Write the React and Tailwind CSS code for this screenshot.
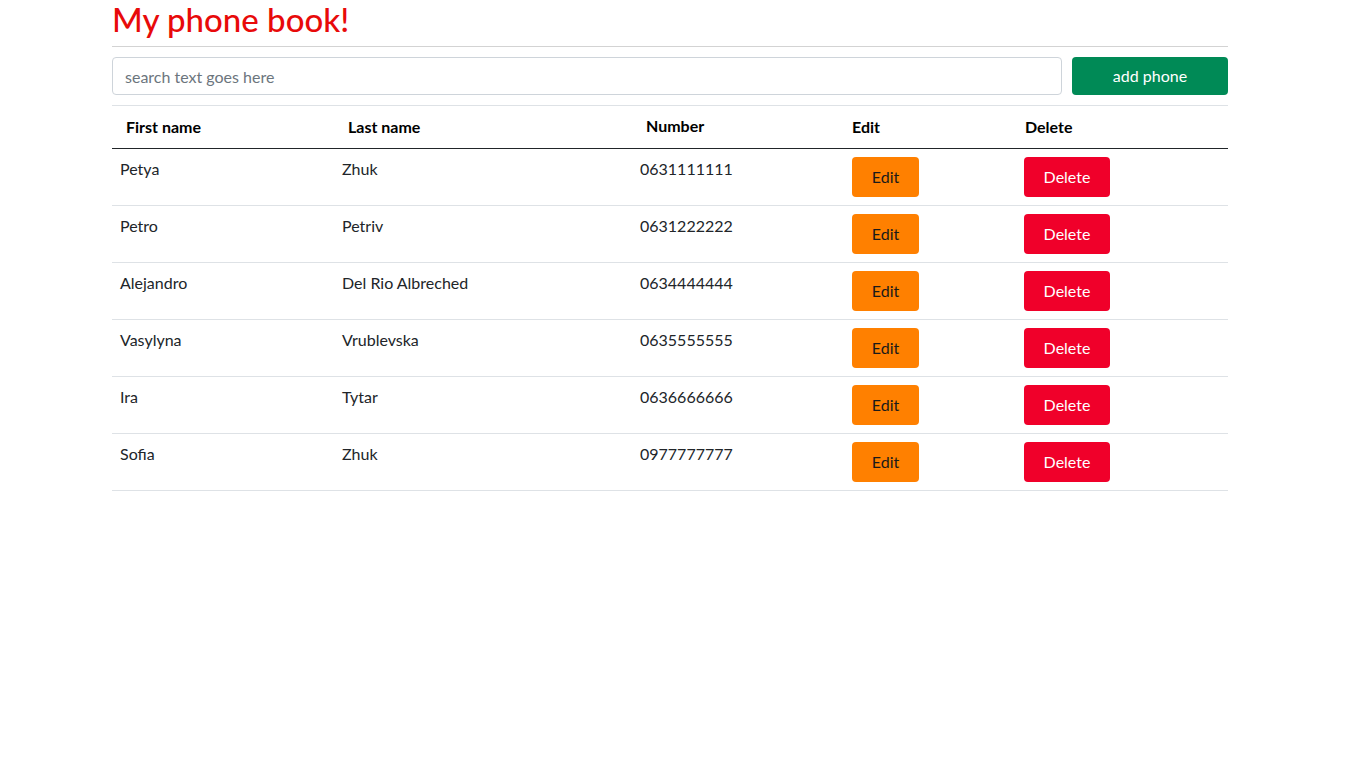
import { useState } from "react";

const phones = [
  { first: "Petya", last: "Zhuk", number: "0631111111" },
  { first: "Petro", last: "Petriv", number: "0631222222" },
  { first: "Alejandro", last: "Del Rio Albreched", number: "0634444444" },
  { first: "Vasylyna", last: "Vrublevska", number: "0635555555" },
  { first: "Ira", last: "Tytar", number: "0636666666" },
  { first: "Sofia", last: "Zhuk", number: "0977777777" },
];

export default function App() {
  const [search, setSearch] = useState("");

  return (
    <div className="min-h-screen bg-white font-['Lato','Liberation_Sans',sans-serif] text-[16px] text-[#212529]">
      <div className="ml-[112px] w-[1116px]">
        {/* header */}
        <h2 className="text-[33px] leading-[38px] font-medium text-[#e80a0a]">
          My phone book!
        </h2>
        <hr className="mt-2 border-t border-[#d3d3d3]" />

        {/* search + add */}
        <div className="mt-[10px] flex gap-[10px]">
          <input
            value={search}
            onChange={(e) => setSearch(e.target.value)}
            placeholder="search text goes here"
            className="h-[38px] flex-1 rounded-[4px] border border-[#ced4da] px-3 text-[16px] outline-none placeholder:text-[#6c757d]"
          />
          <button className="h-[38px] w-[156px] rounded-[4px] bg-[#008a56] text-[16px] text-white">
            add phone
          </button>
        </div>

        {/* table */}
        <table className="mt-[10px] w-full table-fixed border-collapse border-t border-[#dee2e6]">
          <colgroup>
            <col className="w-[222px]" />
            <col className="w-[298px]" />
            <col className="w-[212px]" />
            <col className="w-[172px]" />
            <col className="w-[212px]" />
          </colgroup>
          <thead>
            <tr className="h-[43px] border-b border-[#212529] text-left font-bold text-black">
              <th className="pl-[14px]">First name</th>
              <th className="pl-[14px]">Last name</th>
              <th className="pl-[14px] pb-[2px]">Number</th>
              <th className="pl-2">Edit</th>
              <th className="pl-[9px]">Delete</th>
            </tr>
          </thead>
          <tbody>
            {phones.map((p) => (
              <tr key={p.number} className="h-[57px] border-b border-[#dee2e6] align-top">
                <td className="p-2">{p.first}</td>
                <td className="p-2">{p.last}</td>
                <td className="p-2">{p.number}</td>
                <td className="p-2">
                  <button className="h-[40px] w-[67px] rounded-[4px] bg-[#ff8000] text-[#1a1a1a]">
                    Edit
                  </button>
                </td>
                <td className="p-2">
                  <button className="h-[40px] w-[86px] rounded-[4px] bg-[#f0002a] text-white">
                    Delete
                  </button>
                </td>
              </tr>
            ))}
          </tbody>
        </table>
      </div>
    </div>
  );
}
